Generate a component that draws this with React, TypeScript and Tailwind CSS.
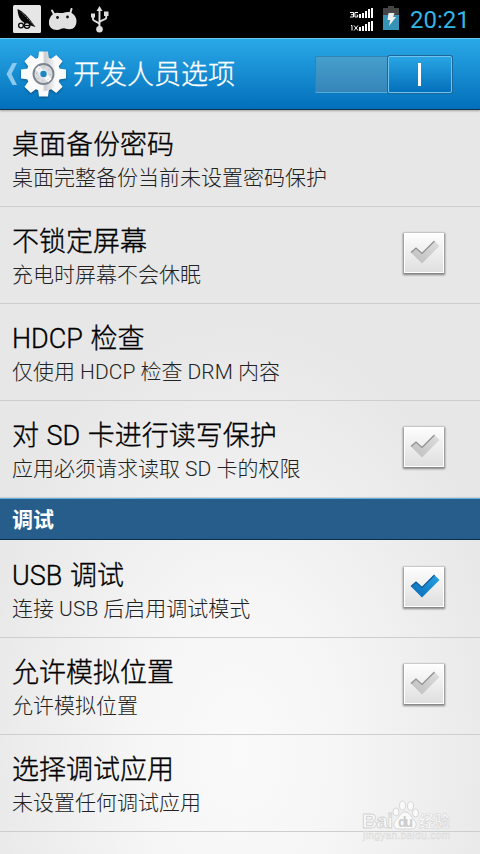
interface Preference {
  title: string;
  summary: string;
  checked?: boolean;
}

const generalItems: Preference[] = [
  { title: '桌面备份密码', summary: '桌面完整备份当前未设置密码保护' },
  { title: '不锁定屏幕', summary: '充电时屏幕不会休眠', checked: false },
  { title: 'HDCP 检查', summary: '仅使用 HDCP 检查 DRM 内容' },
  { title: '对 SD 卡进行读写保护', summary: '应用必须请求读取 SD 卡的权限', checked: false },
];

const debugItems: Preference[] = [
  { title: 'USB 调试', summary: '连接 USB 后启用调试模式', checked: true },
  { title: '允许模拟位置', summary: '允许模拟位置', checked: false },
  { title: '选择调试应用', summary: '未设置任何调试应用' },
];

const teeth = [0, 45, 90, 135, 180, 225, 270, 315];
const bars = [4, 5, 7, 9, 10];

const SignalBars = ({ label }: { label: string }) => (
  <svg width="24" height="11" viewBox="0 0 24 11" fill="#fff">
    {label === '3G' ? (
      <path d="M0 5.5h3.500v4.500H0M1 7.700h2.500M8 5.500H4.900v4.500H7.600V8H6.600" fill="none" stroke="#fff" />
    ) : (
      <path d="M1 5.500h1v5M4 5.500l4 5M8 5.500l-4 5" fill="none" stroke="#fff" />
    )}
    {bars.map((h, i) => (
      <rect key={h} x={9 + i * 3} y={11 - h} width="2" height={h} />
    ))}
  </svg>
);

const StatusBar = () => (
  <div className="flex h-[38px] items-start bg-black">
    <svg className="ml-[13px] mt-[5px]" width="28" height="28" viewBox="0 0 28 28">
      <rect x="0" y="0" width="28" height="28" rx="1.5" fill="#e6e6e6" />
      <path d="M4.500 4C10 6.500 15 11 22.500 22l-5-1.500C9 18 5 14 4.500 4Z" fill="#080808" />
      <path d="M9 7.500l12 13" stroke="#e6e6e6" strokeWidth=".6" strokeDasharray="1.500 1" />
      <circle cx="8" cy="20.500" r="2.400" fill="#e6e6e6" stroke="#080808" strokeWidth="1.300" />
      <circle cx="14" cy="20.500" r="2.800" fill="#e6e6e6" stroke="#080808" strokeWidth="1.300" />
      <path d="M12 20.500h4" stroke="#080808" strokeWidth="1.200" />
    </svg>
    <svg className="ml-[7px] mt-[8px]" width="30" height="24" viewBox="0 0 30 24">
      <path d="M4 2.500l2.500 4.500M23.500 1L22 6" stroke="#dedede" strokeWidth="2" strokeLinecap="round" />
      <path
        d="M6 5.500C9 4 12 5.500 15 5c3-1 7-2 10 1 4 3 4.500 9 2 12.500C25 22 20 21.500 17 20.500c-3-.8-4.500 1.500-8 1.500-5 0-8.500-3.500-8-8C1 11 3 7 6 5.500Z"
        fill="#e1e1e1"
      />
      <circle cx="9.500" cy="9.500" r="1.400" fill="#111" />
      <circle cx="19.500" cy="9" r="1.400" fill="#111" />
    </svg>
    <svg className="ml-[12px] mt-[6px]" width="20" height="27" viewBox="0 0 20 27" fill="#dedede">
      <path d="M9.500 0l3 5h-6zM1 7.500h4v4H1zM14 5.500h4.500v4.500H14z" />
      <circle cx="9.500" cy="23.200" r="3.300" />
      <path d="M9.500 4v17M3 10v3.500c0 1.500 6.300 2.500 6.300 5M16.200 8.500V12c0 1.800-6.500 2-6.500 4.500" fill="none" stroke="#dedede" strokeWidth="1.900" />
    </svg>
    <div className="mt-[7px] ml-auto flex flex-col gap-[2px]">
      <SignalBars label="3G" />
      <SignalBars label="1X" />
    </div>
    <svg className="ml-[9px] mt-[6px]" width="17" height="25" viewBox="0 0 17 25">
      <path d="M5 0h6v2h5v7H0V2h5z" fill="#444" />
      <path d="M0 9h16v15H0z" fill="#3593b5" />
      <path d="M5.500 7h6l-1.500 4h3L6 20l1.200-6H4.500z" fill="#eee" />
    </svg>
    <span className="mr-[11px] ml-[10px] w-[59px] text-[24px] leading-[40px] whitespace-nowrap text-[#33b5e5]">20:21</span>
  </div>
);

const ActionBar = () => (
  <div className="flex h-[72px] items-center border-t border-b border-t-[#69c5f1] border-b-[#123450] bg-linear-to-b from-[#29a9e8] to-[#026fba] shadow-[0_1px_2px_rgba(0,0,0,0.3)]">
    <svg className="ml-[6px]" width="11" height="22" viewBox="0 0 11 22">
      <path d="M6.500 0H11L5.500 11L11 22H6.500L0.500 11Z" fill="#8bc9ed" />
    </svg>
    <svg className="ml-[4px] drop-shadow-[0_1px_1px_rgba(0,0,0,0.35)]" width="45" height="46" viewBox="-22.5 -23 45 46">
      <defs>
        <linearGradient id="gear" x1="-22" y1="0" x2="22" y2="0" gradientUnits="userSpaceOnUse">
          <stop offset="0" stopColor="#fff" />
          <stop offset=".48" stopColor="#f8f8f8" />
          <stop offset=".53" stopColor="#c9cccf" />
          <stop offset=".78" stopColor="#fafafa" />
          <stop offset="1" stopColor="#fff" />
        </linearGradient>
      </defs>
      {teeth.map((angle) => (
        <path
          key={angle}
          d="M-5.500 -15L-4.500 -22.500H4.500L5.500 -15Z"
          fill={angle === 0 ? 'url(#gear)' : '#fafafa'}
          transform={`rotate(${angle})`}
        />
      ))}
      <circle r="17" fill="url(#gear)" />
      <circle r="10" fill="#d9dbde" stroke="#7b8490" strokeWidth="1.900" />
      <path d="M-6.500 -6.500L6.500 6.500" stroke="#f8f8f8" strokeWidth="5" />
      <circle r="7" fill="none" stroke="#999" strokeWidth=".8" strokeDasharray="1 4.500" />
      <circle r="4.300" fill="#eef0f1" />
      <circle r="3.200" fill="#1d87c4" />
    </svg>
    <h1 className="mt-[2px] ml-[7px] text-[27px] leading-[36px] font-light text-white [-webkit-text-stroke:0.3px_#fff]">开发人员选项</h1>
    <div className="mr-[28px] ml-auto flex h-[37px] w-[137px] border border-[#3183b4] border-b-[#55abd9] bg-linear-to-b from-[#469fcc] to-[#3685b9]">
      <div className="-my-px -mr-px ml-auto flex w-[64px] items-center justify-center rounded-[2px] border border-[#6fc3ed] bg-linear-to-b from-[#28a5e4] to-[#0370bb] shadow-[0_0_0_1px_#1c6797]">
        <div className="mr-px h-[23px] w-[3px] bg-white" />
      </div>
    </div>
  </div>
);

const Checkbox = ({ checked }: { checked: boolean }) => (
  <div className="mb-[4px] flex h-[40px] w-[40px] items-center justify-center border border-white bg-linear-to-b from-[#fdfdfd] to-[#dfdfdf] shadow-[0_1px_2px_1px_rgba(0,0,0,0.45)]">
    <svg className="mb-[2px] ml-[2px]" width="30" height="24" viewBox="0 0 30 24">
      <defs>
        <linearGradient id="tickOn" x1="0" y1="1" x2="1" y2="0">
          <stop offset="0" stopColor="#0968b3" />
          <stop offset="1" stopColor="#27a5e4" />
        </linearGradient>
        <linearGradient id="tickOff" x1="0" y1="1" x2="1" y2="0">
          <stop offset="0" stopColor="#bdbdbd" />
          <stop offset="1" stopColor="#dedede" />
        </linearGradient>
      </defs>
      <path d="M1 12.500L6 8L12 13.500L24.500 1L29.500 6L12 23.500Z" fill={checked ? 'url(#tickOn)' : 'url(#tickOff)'} />
      <path d="M1 12.500L6 8L12 13.500L24.500 1" fill="none" stroke={checked ? '#0b5599' : '#8e8e8e'} strokeWidth="1.200" />
    </svg>
  </div>
);

const PreferenceRow = ({ item }: { item: Preference }) => (
  <div className="flex h-[97px] shrink-0 items-center justify-between border-b border-[#cecece] pr-[36px] pl-[12px]">
    <div className="pt-[8px] whitespace-nowrap">
      <div className="text-[27px] leading-[33px] font-light text-black [-webkit-text-stroke:0.35px_#000] [word-spacing:1px]">{item.title}</div>
      <div className="text-[21px] leading-[33px] font-light text-[#222]">{item.summary}</div>
    </div>
    {item.checked !== undefined && <Checkbox checked={item.checked} />}
  </div>
);

const Watermark = () => (
  <div className="absolute top-[798px] left-[362px] w-[92px]">
    <svg width="92" height="48" viewBox="0 0 92 48" fill="#fafafa" stroke="#d2d2d2" strokeWidth=".9">
      <text x="0" y="30" fontSize="21" fontWeight="700" textLength="31" fontFamily="Liberation Sans, sans-serif">Bai</text>
      <ellipse cx="34" cy="14" rx="3" ry="4" />
      <ellipse cx="40.500" cy="7.500" rx="3" ry="4.500" />
      <ellipse cx="48.500" cy="8" rx="3" ry="4.300" />
      <ellipse cx="53.500" cy="15" rx="3" ry="4" />
      <path d="M43 14c5 0 6 5 9 8 4 4 2 9-3 9H37c-5 0-7-5-3-9 4-3 4-8 9-8Z" />
      <text x="36" y="29" fontSize="14" fontWeight="700" textLength="15" fill="#ccc" stroke="none" fontFamily="Liberation Sans, sans-serif">du</text>
      <text x="57" y="29" fontSize="15.500" fontWeight="700" textLength="31" strokeWidth=".5" fontFamily="Noto Sans CJK SC, sans-serif">经验</text>
      <text x="1" y="41" fontSize="10" textLength="87" fill="#f6f6f6" stroke="#dadada" strokeWidth=".5" fontFamily="Liberation Sans, sans-serif">jingyan.baidu.com</text>
    </svg>
  </div>
);

export default function App() {
  return (
    <div className="relative flex h-[854px] w-[480px] flex-col overflow-hidden bg-[radial-gradient(ellipse_280px_430px_at_50%_88%,#fafafa_0%,#f6f6f6_35%,#e7e7e7_100%)] font-['Roboto','Noto_Sans_CJK_SC',sans-serif]">
      <StatusBar />
      <ActionBar />
      {generalItems.map((item) => (
        <PreferenceRow key={item.title} item={item} />
      ))}
      <h2 className="mb-px h-[42px] shrink-0 border-t border-b border-t-[#67aee2] border-b-[#0b2e4e] bg-[#265d8b] pl-[12px] text-[21px] leading-[42px] font-bold text-white">
        调试
      </h2>
      {debugItems.map((item) => (
        <PreferenceRow key={item.title} item={item} />
      ))}
      <Watermark />
    </div>
  );
}
